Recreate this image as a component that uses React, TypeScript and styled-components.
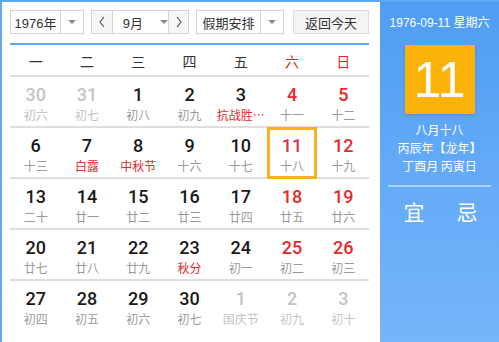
import React from "react";
import styled, { createGlobalStyle } from "styled-components";

const Global = createGlobalStyle`
  html, body { margin: 0; padding: 0; background: #fff; }
  body { font-family: Arial, "Liberation Sans", "Noto Sans CJK SC", sans-serif; }
`;

const Frame = styled.div`
  width: 497px;
  height: 340px;
  display: flex;
  border-left: 2px solid #5ea8f5;
  border-top: 2px solid #5ea8f5;
  overflow: hidden;
`;

const Main = styled.div`
  width: 378px;
  padding: 8px 0 0 8px;
  box-sizing: border-box;
  display: flex;
  flex-direction: column;
`;

const Toolbar = styled.div`
  display: flex;
  height: 24px;
  width: 359px;
`;

const Box = styled.div<{ $w: number; $ml?: number }>`
  width: ${(p) => p.$w}px;
  margin-left: ${(p) => p.$ml ?? 0}px;
  height: 24px;
  box-sizing: border-box;
  border: 1px solid #d4d4d4;
  display: flex;
  font-family: Arial, "Liberation Sans", "Noto Sans CJK SC", sans-serif;
  font-size: 13px;
  color: #222;
  background: #fff;
`;

const Seg = styled.div<{ $w?: number; $grey?: boolean; $left?: boolean; $right?: boolean; $start?: boolean }>`
  ${(p) => (p.$w ? `width: ${p.$w}px;` : "flex: 1;")}
  display: flex;
  align-items: center;
  justify-content: ${(p) => (p.$start ? "flex-start" : "center")};
  ${(p) => (p.$start ? "padding-left: 10px;" : "")}
  white-space: nowrap;
  background: ${(p) => (p.$grey ? "#f6f6f6" : "#fff")};
  ${(p) => (p.$left ? "border-left: 1px solid #d4d4d4;" : "")}
  ${(p) => (p.$right ? "border-right: 1px solid #d4d4d4;" : "")}
  color: #333;
`;

const Caret = styled.span<{ $ml?: number }>`
  width: 0;
  height: 0;
  margin-left: ${(p) => p.$ml ?? 0}px;
  border-left: 4px solid transparent;
  border-right: 4px solid transparent;
  border-top: 4px solid #888;
`;

const CjkText = styled.span`
  font-family: "Noto Sans CJK SC", sans-serif;
`;

const ReturnBtn = styled.div`
  width: 76px;
  margin-left: 9px;
  height: 24px;
  box-sizing: border-box;
  border: 1px solid #dcdcdc;
  background: #f4f4f4;
  display: flex;
  align-items: center;
  justify-content: center;
  font-family: "Noto Sans CJK SC", sans-serif;
  font-size: 13px;
  color: #333;
`;

const BlueLine = styled.div`
  width: 359px;
  height: 2px;
  background: #5ea8f5;
  margin-top: 9px;
`;

const WeekHead = styled.div`
  width: 359px;
  display: grid;
  grid-template-columns: repeat(7, 1fr);
  height: 30px;
  border-bottom: 2px solid #dedede;
`;

const WeekCell = styled.div<{ $red?: boolean }>`
  display: flex;
  align-items: center;
  justify-content: center;
  font-family: "Noto Sans CJK SC", sans-serif;
  font-size: 14px;
  color: ${(p) => (p.$red ? "#e02727" : "#333")};
  padding-top: 1px;
`;

const Row = styled.div<{ $last?: boolean }>`
  width: 359px;
  display: grid;
  grid-template-columns: repeat(7, 1fr);
  height: ${(p) => (p.$last ? 60 : 49)}px;
  ${(p) => (p.$last ? "" : "border-bottom: 2px solid #dedede;")}
`;

const Cell = styled.div<{ $sel?: boolean }>`
  display: flex;
  flex-direction: column;
  align-items: center;
  box-sizing: border-box;
  padding-top: 8px;
  ${(p) => (p.$sel ? "border: 3px solid #f7b31e; margin: -1px 1px -2px 1px; padding-top: 6px;" : "")}
`;

const Num = styled.div<{ $c: string }>`
  font-family: Roboto, Arial, sans-serif;
  font-weight: 500;
  font-size: 18px;
  line-height: 20px;
  color: ${(p) => p.$c};
`;

const Lunar = styled.div<{ $c: string }>`
  font-family: "Noto Sans CJK SC", sans-serif;
  font-size: 12px;
  line-height: 16px;
  margin-top: 2px;
  color: ${(p) => p.$c};
  white-space: nowrap;
`;

const Side = styled.div`
  flex: 1;
  background: linear-gradient(180deg, #4f9df3 0%, #64aaf7 50%, #74b6fb 100%);
  display: flex;
  flex-direction: column;
  align-items: center;
  color: #fff;
  font-family: "Noto Sans CJK SC", sans-serif;
`;

const DateLine = styled.div`
  margin-top: 13px;
  font-size: 12px;
  line-height: 16px;
  font-family: Arial, "Liberation Sans", "Noto Sans CJK SC", sans-serif;
`;

const BigDay = styled.div`
  margin-top: 14px;
  width: 70px;
  height: 69px;
  background: #fbb309;
  box-shadow: 0 1px 3px rgba(0, 0, 0, 0.15);
  display: flex;
  align-items: center;
  justify-content: center;
  font-family: Arial, "Liberation Sans", sans-serif;
  font-size: 50px;
  color: #fff;
`;

const InfoLine = styled.div<{ $mt: number }>`
  margin-top: ${(p) => p.$mt}px;
  font-size: 12px;
  line-height: 16px;
  white-space: nowrap;
`;

const Divider = styled.div`
  margin-top: 11px;
  width: 103px;
  height: 2px;
  background: rgba(255, 255, 255, 0.45);
`;

const YiJi = styled.div`
  margin-top: 10px;
  width: 74px;
  margin-left: 2px;
  display: flex;
  justify-content: space-between;
  font-size: 21px;
  line-height: 28px;
`;

type D = { n: number; l: string; kind: "other" | "norm" | "wk"; fest?: boolean; sel?: boolean };

const rows: D[][] = [
  [
    { n: 30, l: "初六", kind: "other" },
    { n: 31, l: "初七", kind: "other" },
    { n: 1, l: "初八", kind: "norm" },
    { n: 2, l: "初九", kind: "norm" },
    { n: 3, l: "抗战胜…", kind: "norm", fest: true },
    { n: 4, l: "十一", kind: "wk" },
    { n: 5, l: "十二", kind: "wk" },
  ],
  [
    { n: 6, l: "十三", kind: "norm" },
    { n: 7, l: "白露", kind: "norm", fest: true },
    { n: 8, l: "中秋节", kind: "norm", fest: true },
    { n: 9, l: "十六", kind: "norm" },
    { n: 10, l: "十七", kind: "norm" },
    { n: 11, l: "十八", kind: "wk", sel: true },
    { n: 12, l: "十九", kind: "wk" },
  ],
  [
    { n: 13, l: "二十", kind: "norm" },
    { n: 14, l: "廿一", kind: "norm" },
    { n: 15, l: "廿二", kind: "norm" },
    { n: 16, l: "廿三", kind: "norm" },
    { n: 17, l: "廿四", kind: "norm" },
    { n: 18, l: "廿五", kind: "wk" },
    { n: 19, l: "廿六", kind: "wk" },
  ],
  [
    { n: 20, l: "廿七", kind: "norm" },
    { n: 21, l: "廿八", kind: "norm" },
    { n: 22, l: "廿九", kind: "norm" },
    { n: 23, l: "秋分", kind: "norm", fest: true },
    { n: 24, l: "初一", kind: "norm" },
    { n: 25, l: "初二", kind: "wk" },
    { n: 26, l: "初三", kind: "wk" },
  ],
  [
    { n: 27, l: "初四", kind: "norm" },
    { n: 28, l: "初五", kind: "norm" },
    { n: 29, l: "初六", kind: "norm" },
    { n: 30, l: "初七", kind: "norm" },
    { n: 1, l: "国庆节", kind: "other" },
    { n: 2, l: "初九", kind: "other" },
    { n: 3, l: "初十", kind: "other" },
  ],
];

const numColor = (d: D) =>
  d.kind === "other" ? "#c4c4c4" : d.sel ? "#d2344c" : d.kind === "wk" ? "#e42a2a" : "#1a1a1a";
const lunarColor = (d: D) =>
  d.kind === "other" ? "#c4c4c4" : d.fest ? "#dd2a2a" : "#9a9a9a";

const Chevron = ({ dir }: { dir: "l" | "r" }) => (
  <svg width="8" height="12" viewBox="0 0 8 12">
    <path
      d={dir === "l" ? "M6 1 L2 6 L6 11" : "M2 1 L6 6 L2 11"}
      fill="none"
      stroke="#555"
      strokeWidth="1.2"
    />
  </svg>
);

export default function App() {
  return (
    <>
      <Global />
      <Frame>
        <Main>
          <Toolbar>
            <Box $w={74}>
              <Seg>1976年</Seg>
              <Seg $w={22} $left>
                <Caret />
              </Seg>
            </Box>
            <Box $w={98} $ml={7}>
              <Seg $w={22} $grey $right>
                <Chevron dir="l" />
              </Seg>
              <Seg $start>
                9月
                <Caret $ml={17} />
              </Seg>
              <Seg $w={21} $grey $left>
                <Chevron dir="r" />
              </Seg>
            </Box>
            <Box $w={88} $ml={7}>
              <Seg>
                <CjkText>假期安排</CjkText>
              </Seg>
              <Seg $w={22} $left>
                <Caret />
              </Seg>
            </Box>
            <ReturnBtn>返回今天</ReturnBtn>
          </Toolbar>
          <BlueLine />
          <WeekHead>
            {["一", "二", "三", "四", "五", "六", "日"].map((w, i) => (
              <WeekCell key={w} $red={i >= 5}>
                {w}
              </WeekCell>
            ))}
          </WeekHead>
          {rows.map((r, ri) => (
            <Row key={ri} $last={ri === rows.length - 1}>
              {r.map((d, i) => (
                <Cell key={i} $sel={d.sel}>
                  <Num $c={numColor(d)}>{d.n}</Num>
                  <Lunar $c={lunarColor(d)}>{d.l}</Lunar>
                </Cell>
              ))}
            </Row>
          ))}
        </Main>
        <Side>
          <DateLine>1976-09-11 星期六</DateLine>
          <BigDay>11</BigDay>
          <InfoLine $mt={8}>八月十八</InfoLine>
          <InfoLine $mt={2}>丙辰年【龙年】</InfoLine>
          <InfoLine $mt={2}>丁酉月 丙寅日</InfoLine>
          <Divider />
          <YiJi>
            <span>宜</span>
            <span>忌</span>
          </YiJi>
        </Side>
      </Frame>
    </>
  );
}
